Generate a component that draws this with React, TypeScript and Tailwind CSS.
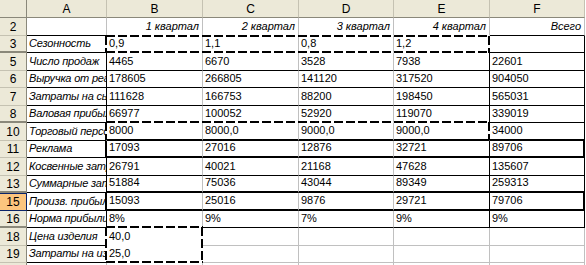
import React from 'react';

// border codes: first letter = right edge, second = bottom edge
// G grid line, K thin black, T thick black, W blank (covered by a dashed marquee)
const RIGHT: Record<string, string> = {
  G: 'border-r border-r-[#c0c0c0]',
  K: 'border-r border-r-black',
  T: 'border-r-2 border-r-black',
  W: 'border-r border-r-white',
};
const BOTTOM: Record<string, string> = {
  G: 'border-b border-b-[#c0c0c0]',
  K: 'border-b border-b-black',
  T: 'border-b-2 border-b-black',
  W: 'border-b border-b-white',
};

type Cell = [string, string];
type Row = {
  n: string;
  h: 17 | 18;
  hidden?: boolean; // a hidden row follows
  sel?: boolean;
  head?: boolean;
  a: Cell;
  c: Cell[];
};

const rows: Row[] = [
  {
    n: '2', h: 18, head: true, a: ['', 'GK'],
    c: [['1 квартал', 'GW'], ['2 квартал', 'GW'], ['3 квартал', 'GW'], ['4 квартал', 'GW'], ['Всего', 'GK']],
  },
  {
    n: '3', h: 17, hidden: true, a: ['Сезонность', 'WK'],
    c: [['0,9', 'GW'], ['1,1', 'GW'], ['0,8', 'GW'], ['1,2', 'WW'], ['', 'KK']],
  },
  {
    n: '5', h: 18, a: ['Число продаж', 'KK'],
    c: [['4465', 'GK'], ['6670', 'GK'], ['3528', 'GK'], ['7938', 'KK'], ['22601', 'KK']],
  },
  {
    n: '6', h: 17, a: ['Выручка от реализации', 'KK'],
    c: [['178605', 'GK'], ['266805', 'GK'], ['141120', 'GK'], ['317520', 'KK'], ['904050', 'KK']],
  },
  {
    n: '7', h: 18, a: ['Затраты на сырьё', 'KK'],
    c: [['111628', 'GK'], ['166753', 'GK'], ['88200', 'GK'], ['198450', 'KK'], ['565031', 'KK']],
  },
  {
    n: '8', h: 17, hidden: true, a: ['Валовая прибыль', 'KK'],
    c: [['66977', 'GW'], ['100052', 'GW'], ['52920', 'GW'], ['119070', 'KW'], ['339019', 'KK']],
  },
  {
    n: '10', h: 18, a: ['Торговый персонал', 'WK'],
    c: [['8000', 'GT'], ['8000,0', 'GT'], ['9000,0', 'GT'], ['9000,0', 'WT'], ['34000', 'KT']],
  },
  {
    n: '11', h: 17, a: ['Реклама', 'TK'],
    c: [['17093', 'GT'], ['27016', 'GT'], ['12876', 'GT'], ['32721', 'KT'], ['89706', 'TT']],
  },
  {
    n: '12', h: 18, a: ['Косвенные затраты', 'KK'],
    c: [['26791', 'GK'], ['40021', 'GK'], ['21168', 'GK'], ['47628', 'KK'], ['135607', 'KK']],
  },
  {
    n: '13', h: 17, hidden: true, a: ['Суммарные затраты', 'KK'],
    c: [['51884', 'GT'], ['75036', 'GT'], ['43044', 'GT'], ['89349', 'KT'], ['259313', 'KT']],
  },
  {
    n: '15', h: 18, sel: true, a: ['Произв. прибыль', 'TK'],
    c: [['15093', 'GT'], ['25016', 'GT'], ['9876', 'GT'], ['29721', 'KT'], ['79706', 'TT']],
  },
  {
    n: '16', h: 17, hidden: true, a: ['Норма прибыли', 'KK'],
    c: [['8%', 'GW'], ['9%', 'GK'], ['7%', 'GK'], ['9%', 'KK'], ['9%', 'KK']],
  },
  {
    n: '18', h: 18, a: ['Цена изделия', 'WK'],
    c: [['40,0', 'WW'], ['', 'GG'], ['', 'GG'], ['', 'GG'], ['', 'GG']],
  },
  {
    n: '19', h: 17, a: ['Затраты на изделие', 'WK'],
    c: [['25,0', 'WW'], ['', 'GG'], ['', 'GG'], ['', 'GG'], ['', 'GG']],
  },
  {
    n: '20', h: 17, a: ['', 'GG'],
    c: [['', 'GG'], ['', 'GG'], ['', 'GG'], ['', 'GG'], ['', 'GG']],
  },
];

const edge = (code: string) => `${RIGHT[code[0]]} ${BOTTOM[code[1]]}`;

function RowHeader({ row }: { row: Row }) {
  const height = row.h === 18 ? 'h-[18px]' : 'h-[17px]';
  const bottom = row.hidden ? 'border-b-2 border-b-[#8a887a]' : 'border-b border-b-[#c5c2b2]';
  const look = row.sel
    ? 'bg-[#fcc57e] border-r border-r-[#0a246a] border-t border-t-[#0a246a] border-b border-b-[#0a246a]'
    : `bg-[#ece9d8] border-r border-r-[#8a887a] ${bottom}`;
  return (
    <div className={`${height} ${look} flex items-center justify-center text-[12px] leading-[14px] text-black`}>
      {row.n}
    </div>
  );
}

export default function App() {
  return (
    <div className="relative h-[265px] w-[586px] overflow-hidden bg-white font-['Liberation_Sans',Arial,sans-serif] text-black">
      <div className="grid grid-cols-[27px_80px_96px_96px_95px_96px_95px]">
        <div className="h-[18px] border-r border-b border-r-[#8a887a] border-b-[#8a887a] bg-[#ece9d8]" />
        {['A', 'B', 'C', 'D', 'E', 'F'].map((l) => (
          <div
            key={l}
            className="flex h-[18px] items-center justify-center border-r border-b border-r-[#c5c2b2] border-b-[#8a887a] bg-[#ece9d8] pt-[1px] text-[12px] leading-[14px]"
          >
            {l}
          </div>
        ))}

        {rows.map((row) => {
          const height = row.h === 18 ? 'h-[18px]' : 'h-[17px]';
          return (
            <React.Fragment key={row.n}>
              <RowHeader row={row} />
              <div
                className={`${height} ${edge(row.a[1])} flex items-end overflow-hidden whitespace-nowrap pb-[2px] pl-[2px] text-[11px] italic leading-[13px] tracking-[-0.2px]`}
              >
                {row.a[0]}
              </div>
              {row.c.map(([t, b], i) => (
                <div
                  key={i}
                  className={`${height} ${edge(b)} flex items-end overflow-hidden whitespace-nowrap pb-[2px] text-[11px] leading-[13px] ${
                    row.head ? 'justify-end pr-[3px] italic' : 'pl-[2px]'
                  }`}
                >
                  {t}
                </div>
              ))}
            </React.Fragment>
          );
        })}
      </div>

      {/* copy marquees drawn over the cells */}
      <svg
        className="pointer-events-none absolute left-0 top-0"
        width="586"
        height="265"
        fill="none"
        stroke="black"
        strokeWidth="2"
        strokeDasharray="9 3"
      >
        <path d="M106 36H490 M489 36V53 M106 52H490 M106 36V53" />
        <path d="M106 122H490 M489 122V140 M106 122V140" />
        <path d="M106 227H203 M202 227V263 M106 262H203 M106 227V263" />
      </svg>
    </div>
  );
}
